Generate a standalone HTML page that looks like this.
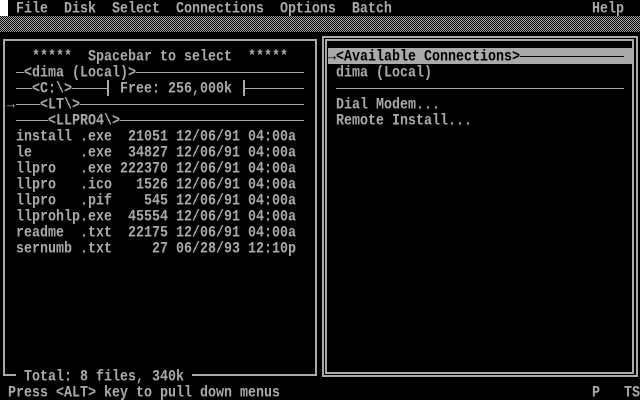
<!DOCTYPE html>
<html><head><meta charset="utf-8"><style>
html,body{margin:0;padding:0;background:#000;}
#s{position:relative;width:640px;height:400px;overflow:hidden;background:#000;font-family:"Liberation Mono","DejaVu Sans Mono",monospace;font-size:13.333px;font-weight:bold;color:#aaa;}
.t{position:absolute;white-space:pre;height:16px;line-height:16px;transform:translateY(2px) scaleY(1.15);transform-origin:50% 50%;}
.h{position:absolute;height:1px;background:#aaa;}
.v{position:absolute;width:2px;background:#aaa;}
.b{position:absolute;box-sizing:border-box;border:2px solid #aaa;}
</style></head><body><div id="s">
<div style="position:absolute;left:0;top:0;width:8px;height:16px;background:#fff"></div>
<div class="t" style="left:16px;top:0">File  Disk  Select  Connections  Options  Batch</div>
<div class="t" style="left:592px;top:0">Help</div>
<div style="position:absolute;left:0;top:16px;width:640px;height:16px;background:repeating-conic-gradient(#aaa 0 25%,#000 0 50%) 0 0/2px 2px"></div>

<div class="b" style="left:3px;top:39px;width:314px;height:337px"></div>
<div class="t" style="left:32px;top:48px">*****  Spacebar to select  *****</div>
<div class="h" style="left:16px;top:72px;width:288px"></div>
<div style="position:absolute;left:24px;top:64px;width:112px;height:16px;background:#000"></div>
<div class="t" style="left:24px;top:64px">&lt;dima (Local)&gt;</div>
<div class="h" style="left:16px;top:88px;width:92px"></div>
<div class="h" style="left:244px;top:88px;width:60px"></div>
<div style="position:absolute;left:32px;top:80px;width:40px;height:16px;background:#000"></div>
<div class="t" style="left:32px;top:80px">&lt;C:\&gt;</div>
<div class="v" style="left:107px;top:80px;height:16px"></div>
<div class="t" style="left:112px;top:80px"> Free: 256,000k </div>
<div class="v" style="left:243px;top:80px;height:16px"></div>
<div class="t" style="left:7px;top:96px">→</div>
<div class="h" style="left:16px;top:104px;width:288px"></div>
<div style="position:absolute;left:40px;top:96px;width:40px;height:16px;background:#000"></div>
<div class="t" style="left:40px;top:96px">&lt;LT\&gt;</div>
<div class="h" style="left:16px;top:120px;width:288px"></div>
<div style="position:absolute;left:48px;top:112px;width:72px;height:16px;background:#000"></div>
<div class="t" style="left:48px;top:112px">&lt;LLPRO4\&gt;</div>
<div class="t" style="left:16px;top:128px">install .exe  21051 12/06/91 04:00a</div>
<div class="t" style="left:16px;top:144px">le      .exe  34827 12/06/91 04:00a</div>
<div class="t" style="left:16px;top:160px">llpro   .exe 222370 12/06/91 04:00a</div>
<div class="t" style="left:16px;top:176px">llpro   .ico   1526 12/06/91 04:00a</div>
<div class="t" style="left:16px;top:192px">llpro   .pif    545 12/06/91 04:00a</div>
<div class="t" style="left:16px;top:208px">llprohlp.exe  45554 12/06/91 04:00a</div>
<div class="t" style="left:16px;top:224px">readme  .txt  22175 12/06/91 04:00a</div>
<div class="t" style="left:16px;top:240px">sernumb .txt     27 06/28/93 12:10p</div>
<div style="position:absolute;left:16px;top:368px;width:176px;height:16px;background:#000"></div>
<div class="t" style="left:16px;top:368px"> Total: 8 files, 340k </div>

<div class="b" style="left:322px;top:36px;width:316px;height:341px"></div>
<div class="b" style="left:325px;top:39px;width:309px;height:335px"></div>
<div style="position:absolute;left:328px;top:48px;width:304px;height:16px;background:#aaa"></div>
<div style="position:absolute;left:520px;top:56px;width:104px;height:1px;background:#000"></div>
<div class="t" style="left:328px;top:48px;color:#000">→&lt;Available Connections&gt;</div>
<div class="t" style="left:336px;top:64px">dima (Local)</div>
<div class="h" style="left:336px;top:88px;width:288px"></div>
<div class="t" style="left:336px;top:96px">Dial Modem...</div>
<div class="t" style="left:336px;top:112px">Remote Install...</div>

<div class="t" style="left:8px;top:384px">Press &lt;ALT&gt; key to pull down menus</div>
<div class="t" style="left:592px;top:384px">P</div>
<div class="t" style="left:624px;top:384px">TS</div>
</div></body></html>
